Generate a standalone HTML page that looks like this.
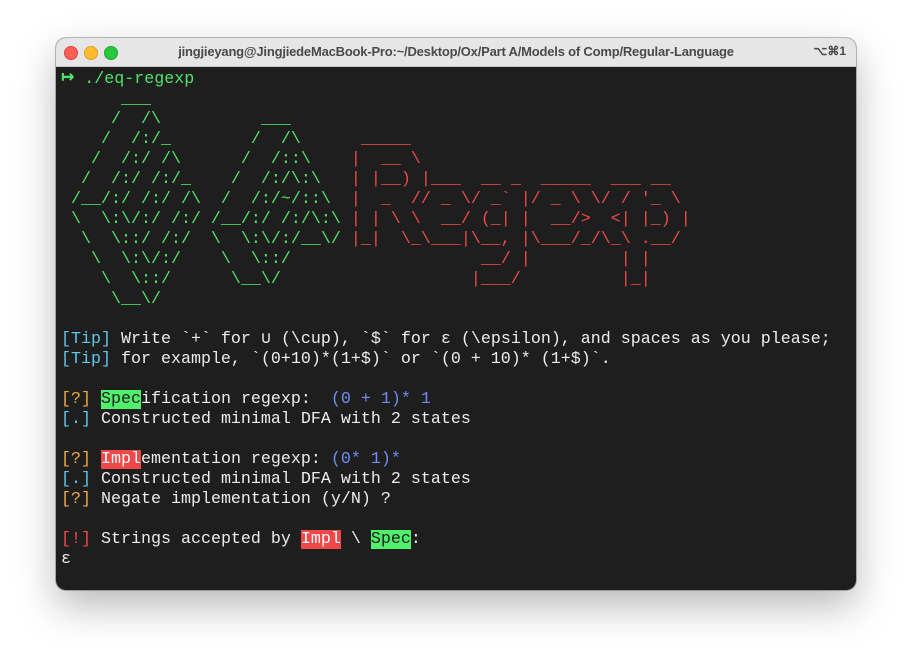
<!DOCTYPE html>
<html><head><meta charset="utf-8"><style>
html,body{margin:0;padding:0;background:#fff;width:912px;height:665px;overflow:hidden}
.win{position:absolute;left:56px;top:38px;width:800px;height:552px;border-radius:10px;background:#1e1e1e;overflow:hidden;box-shadow:0 16px 40px rgba(0,0,0,.28),0 0 0 1px rgba(0,0,0,.25)}
.tb{height:28px;background:#e6e6e6;border-bottom:1px solid #c8c8c8;position:relative;font-family:"Liberation Sans",sans-serif;font-size:13px;font-weight:bold;color:#4a4a4a}
.tb .t{position:absolute;left:0;right:0;top:6px;text-align:center;letter-spacing:-0.2px}
.tb .k{position:absolute;right:10px;top:6px;font-size:12px}
.d{position:absolute;top:8px;width:12px;height:12px;border-radius:50%}
pre{position:absolute;left:5px;top:31px;margin:0;font-family:"Liberation Mono","DejaVu Sans Mono",monospace;font-size:16.667px;line-height:20px;color:#ececec;font-weight:normal}
.g{color:#4fe36a}.r{color:#ec4a47}.c{color:#5fc6e8}.y{color:#f0a840}.b{color:#6d8ff0}.rr{color:#f04848}
.hg{background:#4ef06c;color:#1e1e1e}.hr{background:#f04848;color:#fff}
.ar{font-size:22px;line-height:18px;font-weight:bold}
</style></head><body>
<div class="win">
<div class="tb"><div class="d" style="left:8px;background:#fe5f57;border:0.5px solid #e0443e"></div><div class="d" style="left:28px;background:#febc2e;border:0.5px solid #dea123"></div><div class="d" style="left:48px;background:#28c840;border:0.5px solid #1aab29"></div><div class="t">jingjieyang@JingjiedeMacBook-Pro:~/Desktop/Ox/Part A/Models of Comp/Regular-Language</div><div class="k">⌥⌘1</div></div>
<pre><span class="g"><span class="ar">↦</span> ./eq-regexp</span>
<span class="g">      ___</span>
<span class="g">     /  /\          ___</span>
<span class="g">    /  /:/_        /  /\</span>      <span class="r">_____</span>
<span class="g">   /  /:/ /\      /  /::\</span>    <span class="r">|  __ \</span>
<span class="g">  /  /:/ /:/_    /  /:/\:\</span>   <span class="r">| |__) |___  __ _  _____  ___ __</span>
<span class="g"> /__/:/ /:/ /\  /  /:/~/::\</span>  <span class="r">|  _  // _ \/ _` |/ _ \ \/ / '_ \</span>
<span class="g"> \  \:\/:/ /:/ /__/:/ /:/\:\</span> <span class="r">| | \ \  __/ (_| |  __/&gt;  &lt;| |_) |</span>
<span class="g">  \  \::/ /:/  \  \:\/:/__\/</span> <span class="r">|_|  \_\___|\__, |\___/_/\_\ .__/</span>
<span class="g">   \  \:\/:/    \  \::/</span>      <span class="r">             __/ |         | |</span>
<span class="g">    \  \::/      \__\/</span>       <span class="r">            |___/          |_|</span>
<span class="g">     \__\/</span>

<span class="c">[Tip]</span> Write `+` for ∪ (\cup), `$` for ε (\epsilon), and spaces as you please;
<span class="c">[Tip]</span> for example, `(0+10)*(1+$)` or `(0 + 10)* (1+$)`.

<span class="y">[?]</span> <span class="hg">Spec</span>ification regexp:  <span class="b">(0 + 1)* 1</span>
<span class="c">[.]</span> Constructed minimal DFA with 2 states

<span class="y">[?]</span> <span class="hr">Impl</span>ementation regexp: <span class="b">(0* 1)*</span>
<span class="c">[.]</span> Constructed minimal DFA with 2 states
<span class="y">[?]</span> Negate implementation (y/N) ?

<span class="rr">[!]</span> Strings accepted by <span class="hr">Impl</span> \ <span class="hg">Spec</span>:
ε</pre>
</div>
</body></html>
